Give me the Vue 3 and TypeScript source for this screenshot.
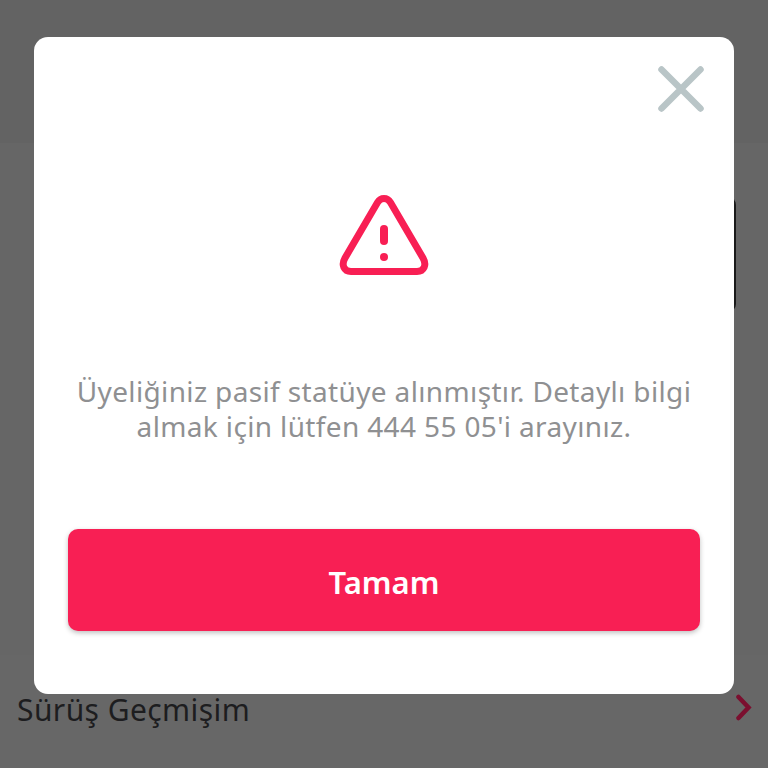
<template>
  <div class="page">
    <div class="header"></div>
    <div class="content">
      <div class="slot"><div class="black-card"></div></div>
      <div class="row">
        <span class="row-label">{{ rowLabel }}</span>
        <svg class="chevron" width="18" height="28" viewBox="0 0 18 28" fill="none">
          <path d="M2.5 3 L12.5 13.5 L2.5 24" stroke="#7b0f2f" stroke-width="4.5" stroke-linecap="round" stroke-linejoin="miter" />
        </svg>
      </div>
    </div>

    <div class="overlay">
      <div class="modal">
        <div class="close-line">
          <svg width="46" height="46" viewBox="0 0 46 46" fill="none">
            <path d="M3.5 3.5 L42.5 42.5 M42.5 3.5 L3.5 42.5" stroke="#b9c5c7" stroke-width="6.5" stroke-linecap="round" />
          </svg>
        </div>
        <div class="icon-line">
          <svg width="90" height="82" viewBox="0 0 90 82" fill="none">
            <path d="M45 3.5 C42 3.5 40 5 38.5 7.5 L6 63 C2 70 5 76.5 12 76.5 L78 76.5 C85 76.5 88 70 84 63 L51.5 7.5 C50 5 48 3.5 45 3.5 Z" stroke="#f81f54" stroke-width="7" stroke-linejoin="round" />
            <path d="M45 34 L45 46" stroke="#f81f54" stroke-width="8" stroke-linecap="round" />
            <circle cx="45" cy="62" r="4" fill="#f81f54" />
          </svg>
        </div>
        <p class="message">{{ message }}</p>
        <button class="ok-btn" type="button">Tamam</button>
      </div>
    </div>
  </div>
</template>

<script setup lang="ts">
const rowLabel = 'Sürüş Geçmişim'
const message = "Üyeliğiniz pasif statüye alınmıştır. Detaylı bilgi almak için lütfen 444 55 05'i arayınız."
</script>

<style>
html, body {
  margin: 0;
  background: #666666;
}
</style>

<style scoped>
.page {
  position: relative;
  width: 768px;
  height: 768px;
  overflow: hidden;
  background: #666666;
  font-family: "Noto Sans", "Open Sans", sans-serif;
}

.header {
  height: 143px;
  background: #636363;
}

.content {
  display: flex;
  flex-direction: column;
  height: 625px;
}

.slot {
  height: 512px;
  padding: 54px 32px 0 0;
  box-sizing: border-box;
  display: flex;
  justify-content: flex-end;
  align-items: flex-start;
}

.black-card {
  width: 20px;
  height: 115px;
  border-radius: 0 8px 8px 0;
  background: #1a1a1a;
}

.row {
  flex: 1;
  display: flex;
  align-items: flex-start;
  justify-content: space-between;
  padding: 37px 14px 0 17px;
  background: #676767;
}

.row-label {
  font-size: 30px;
  line-height: 36px;
  letter-spacing: 0.42px;
  color: #1d1d1f;
}

.chevron {
  margin-top: 2px;
}

.overlay {
  position: absolute;
  inset: 0;
  padding: 37px 34px 0;
  box-sizing: border-box;
}

.modal {
  width: 700px;
  height: 657px;
  box-sizing: border-box;
  padding: 29px 34px 0;
  background: #ffffff;
  border-radius: 14px;
  display: flex;
  flex-direction: column;
}

.close-line {
  display: flex;
  justify-content: flex-end;
  margin-right: -4px;
}

.icon-line {
  display: flex;
  justify-content: center;
  margin-top: 83px;
}

.message {
  margin: 97px -10px 0;
  font-size: 28px;
  line-height: 35px;
  letter-spacing: 0.36px;
  text-align: center;
  color: #8f9092;
}

.ok-btn {
  margin-top: 85px;
  height: 102px;
  padding: 3px 0 0;
  border: none;
  border-radius: 10px;
  background: #f81f54;
  color: #ffffff;
  font-family: inherit;
  font-size: 31px;
  font-weight: 600;
  box-shadow: 0 2px 5px rgba(0, 0, 0, 0.25);
}
</style>
